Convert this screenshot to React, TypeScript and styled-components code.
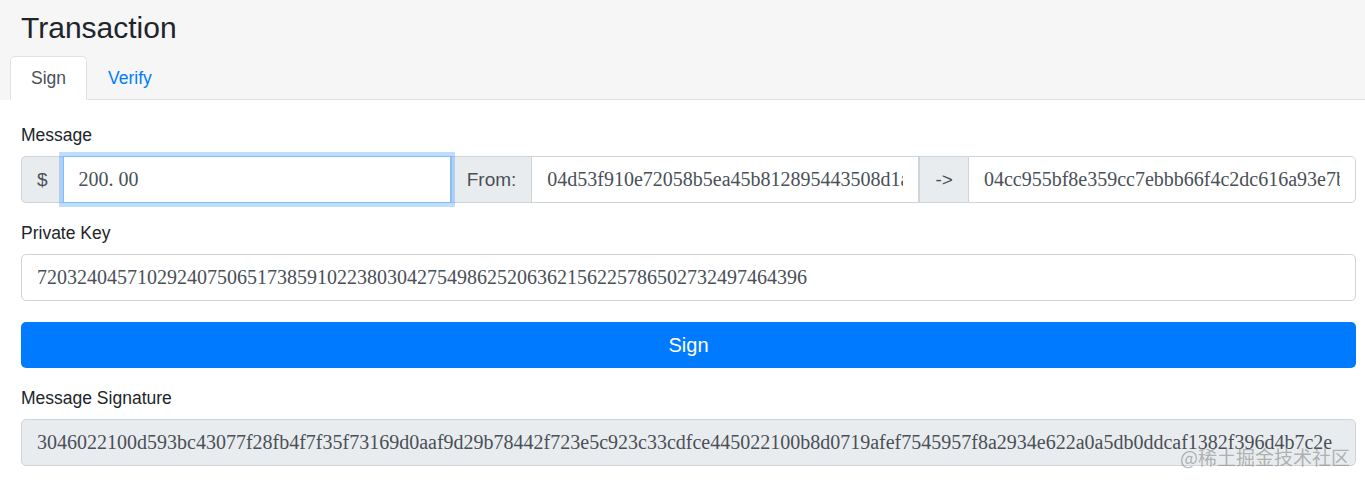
import React from "react";
import styled, { createGlobalStyle } from "styled-components";

const GlobalStyle = createGlobalStyle`
  html, body { margin: 0; padding: 0; background: #ffffff; }
  body { font-family: "Liberation Sans", Arial, sans-serif; color: #212529; }
  * { box-sizing: border-box; }
`;

const Page = styled.div`
  position: relative;
  width: 1365px;
  min-height: 481px;
  background: #ffffff;
`;

const Header = styled.header`
  background: #f6f6f7;
  padding: 10px 0 0 10px;
`;

const Title = styled.h3`
  margin: 0 0 10px 11px;
  font-size: 30px;
  line-height: 36px;
  font-weight: 400;
  color: #212529;
`;

const Tabs = styled.nav`
  display: flex;
  border-bottom: 1px solid #dee2e6;
`;

const Tab = styled.a<{ $active?: boolean }>`
  display: flex;
  align-items: center;
  height: 44px;
  padding: 0 20px;
  margin-bottom: -1px;
  font-size: 17.5px;
  text-decoration: none;
  cursor: pointer;
  border: 1px solid ${(p) => (p.$active ? "#dee2e6" : "transparent")};
  border-bottom-color: ${(p) => (p.$active ? "#ffffff" : "transparent")};
  border-radius: 5px 5px 0 0;
  background: ${(p) => (p.$active ? "#ffffff" : "transparent")};
  color: ${(p) => (p.$active ? "#495057" : "#007bff")};
`;

const Body = styled.main`
  padding: 22px 9px 0 21px;
  display: flex;
  flex-direction: column;
`;

const Label = styled.label`
  display: block;
  font-size: 17.5px;
  line-height: 26px;
  color: #212529;
  margin-bottom: 8px;
`;

const Group = styled.div`
  margin-bottom: 17px;
`;

const InputGroup = styled.div`
  display: flex;
  height: 47px;
`;

const Addon = styled.span<{ $first?: boolean }>`
  display: flex;
  align-items: center;
  padding: 0 15px;
  background: #e9ecef;
  border: 1px solid #ced4da;
  border-right: none;
  color: #495057;
  font-size: 19px;
  border-radius: ${(p) => (p.$first ? "5px 0 0 5px" : "0")};
`;

const Field = styled.input<{ $last?: boolean; $focus?: boolean; $readonly?: boolean }>`
  flex: 1;
  min-width: 0;
  height: 47px;
  padding: 0 15px;
  border: 1px solid ${(p) => (p.$focus ? "#80bdff" : "#ced4da")};
  box-shadow: ${(p) => (p.$focus ? "0 0 0 4px rgba(0, 123, 255, 0.25)" : "none")};
  position: ${(p) => (p.$focus ? "relative" : "static")};
  z-index: ${(p) => (p.$focus ? 2 : "auto")};
  background: ${(p) => (p.$readonly ? "#e9ecef" : "#ffffff")};
  color: #495057;
  font-family: "Liberation Serif", "Noto Sans CJK SC", serif;
  font-size: 20px;
  outline: none;
  border-radius: ${(p) => (p.$last ? "0 5px 5px 0" : "0")};
`;

const SoloField = styled(Field)`
  width: 100%;
  border-radius: 5px;
`;

const SignButton = styled.button`
  height: 46px;
  width: 100%;
  margin: 4px 0 17px;
  border: none;
  border-radius: 5px;
  background: #007bff;
  color: #ffffff;
  font-family: "Liberation Sans", Arial, sans-serif;
  font-size: 20px;
  cursor: pointer;
`;

const Watermark = styled.div`
  position: absolute;
  right: 15px;
  top: 444px;
  font-family: "Noto Sans CJK SC", sans-serif;
  font-size: 19px;
  line-height: 26px;
  color: rgba(140, 140, 140, 0.65);
  pointer-events: none;
`;

export default function App() {
  return (
    <Page>
      <GlobalStyle />
      <Header>
        <Title>Transaction</Title>
        <Tabs>
          <Tab $active>Sign</Tab>
          <Tab>Verify</Tab>
        </Tabs>
      </Header>
      <Body>
        <Group>
          <Label>Message</Label>
          <InputGroup>
            <Addon $first>$</Addon>
            <Field $focus defaultValue="200. 00" />
            <Addon>From:</Addon>
            <Field defaultValue="04d53f910e72058b5ea45b812895443508d1a2c3" />
            <Addon>-&gt;</Addon>
            <Field $last defaultValue="04cc955bf8e359cc7ebbb66f4c2dc616a93e7b1f" />
          </InputGroup>
        </Group>
        <Group>
          <Label>Private Key</Label>
          <SoloField defaultValue="72032404571029240750651738591022380304275498625206362156225786502732497464396" />
        </Group>
        <SignButton>Sign</SignButton>
        <Group>
          <Label>Message Signature</Label>
          <SoloField
            $readonly
            readOnly
            defaultValue="3046022100d593bc43077f28fb4f7f35f73169d0aaf9d29b78442f723e5c923c33cdfce445022100b8d0719afef7545957f8a2934e622a0a5db0ddcaf1382f396d4b7c2e"
          />
        </Group>
      </Body>
      <Watermark>@稀土掘金技术社区</Watermark>
    </Page>
  );
}
